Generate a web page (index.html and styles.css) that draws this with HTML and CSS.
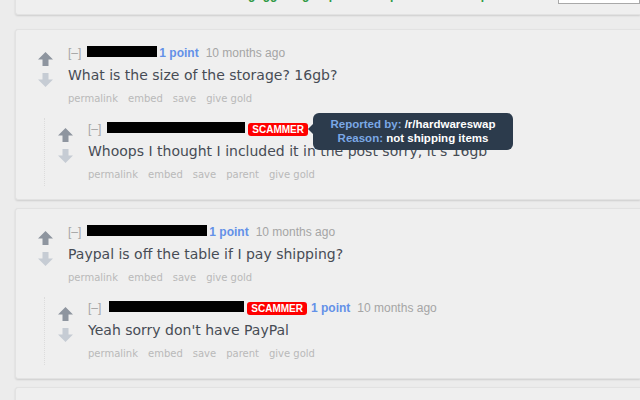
FILE: index.html
```html
<!DOCTYPE html>
<html lang="en">
<head>
    <meta charset="UTF-8">
    <title>Comments</title>
    <link rel="stylesheet" href="styles.css">
</head>
<body>
    <div class="page">
        <div class="card card-top">
            <p class="notice">gogg the group rules · report trades · help</p>
            <input class="search" type="text">
        </div>

        <!-- erster Thread -->
        <div class="card">
            <div class="comment">
                <div class="votes">
                    <svg class="arrow up" width="15" height="14" viewBox="0 0 15 14"><polygon points="7.5,0 15,7.5 10.5,7.5 10.5,14 4.5,14 4.5,7.5 0,7.5"/></svg>
                    <svg class="arrow down" width="15" height="14" viewBox="0 0 15 14"><polygon points="7.5,14 15,6.5 10.5,6.5 10.5,0 4.5,0 4.5,6.5 0,6.5"/></svg>
                </div>
                <div class="entry">
                    <p class="tagline"><span class="expand">[–]</span><span class="redacted w70"></span><span class="score">1 point</span><span class="time">10 months ago</span></p>
                    <p class="md">What is the size of the storage? 16gb?</p>
                    <ul class="buttons">
                        <li>permalink</li><li>embed</li><li>save</li><li>give gold</li>
                    </ul>
                </div>
            </div>
            <div class="child">
                <div class="comment">
                    <div class="votes">
                        <svg class="arrow up" width="15" height="14" viewBox="0 0 15 14"><polygon points="7.5,0 15,7.5 10.5,7.5 10.5,14 4.5,14 4.5,7.5 0,7.5"/></svg>
                        <svg class="arrow down" width="15" height="14" viewBox="0 0 15 14"><polygon points="7.5,14 15,6.5 10.5,6.5 10.5,0 4.5,0 4.5,6.5 0,6.5"/></svg>
                    </div>
                    <div class="entry">
                        <p class="tagline"><span class="expand">[–]</span><span class="redacted w138"></span><span class="badge">SCAMMER<span class="tooltip"><b>Reported by:</b> /r/hardwareswap<br><b>Reason:</b> not shipping items</span></span></p>
                        <p class="md">Whoops I thought I included it in the post sorry, it's 16gb</p>
                        <ul class="buttons">
                            <li>permalink</li><li>embed</li><li>save</li><li>parent</li><li>give gold</li>
                        </ul>
                    </div>
                </div>
            </div>
        </div>

        <!-- zweiter Thread -->
        <div class="card">
            <div class="comment">
                <div class="votes">
                    <svg class="arrow up" width="15" height="14" viewBox="0 0 15 14"><polygon points="7.5,0 15,7.5 10.5,7.5 10.5,14 4.5,14 4.5,7.5 0,7.5"/></svg>
                    <svg class="arrow down" width="15" height="14" viewBox="0 0 15 14"><polygon points="7.5,14 15,6.5 10.5,6.5 10.5,0 4.5,0 4.5,6.5 0,6.5"/></svg>
                </div>
                <div class="entry">
                    <p class="tagline"><span class="expand">[–]</span><span class="redacted w120"></span><span class="score">1 point</span><span class="time">10 months ago</span></p>
                    <p class="md">Paypal is off the table if I pay shipping?</p>
                    <ul class="buttons">
                        <li>permalink</li><li>embed</li><li>save</li><li>give gold</li>
                    </ul>
                </div>
            </div>
            <div class="child">
                <div class="comment">
                    <div class="votes">
                        <svg class="arrow up" width="15" height="14" viewBox="0 0 15 14"><polygon points="7.5,0 15,7.5 10.5,7.5 10.5,14 4.5,14 4.5,7.5 0,7.5"/></svg>
                        <svg class="arrow down" width="15" height="14" viewBox="0 0 15 14"><polygon points="7.5,14 15,6.5 10.5,6.5 10.5,0 4.5,0 4.5,6.5 0,6.5"/></svg>
                    </div>
                    <div class="entry">
                        <p class="tagline"><span class="expand wide">[–]</span><span class="redacted w135"></span><span class="badge">SCAMMER</span><span class="score">1 point</span><span class="time">10 months ago</span></p>
                        <p class="md">Yeah sorry don't have PayPal</p>
                        <ul class="buttons">
                            <li>permalink</li><li>embed</li><li>save</li><li>parent</li><li>give gold</li>
                        </ul>
                    </div>
                </div>
            </div>
        </div>

        <div class="card"></div>
    </div>
</body>
</html>
```

FILE: styles.css
```css
body {
    margin: 0;
    background-color: #ececec;
    font-family: "Liberation Sans", Arial, sans-serif;
    overflow: hidden;
}

p, ul {
    margin: 0;
    padding: 0;
}

.page {
    padding-left: 15px;
}

.card {
    background-color: #efefef;
    border: 1px solid #e2e2e2;
    border-right: none;
    border-radius: 3px 0 0 3px;
    box-shadow: 0 1px 2px rgba(0, 0, 0, 0.13);
    margin-bottom: 8px;
    padding: 15px 0 14px 22px;
    height: 140px;
}

/* oberer, abgeschnittener Kasten */
.card-top {
    margin-top: -30px;
    margin-bottom: 14px;
    height: 43px;
    padding: 0;
    display: flex;
    justify-content: flex-end;
    align-items: flex-start;
    position: relative;
}

.notice {
    position: absolute;
    left: 232px;
    top: 16px;
    color: #2f9a45;
    font-size: 12px;
    font-weight: bold;
    line-height: 16px;
    white-space: nowrap;
}

.search {
    width: 82px;
    height: 20px;
    margin-top: 13px;
    border: 1px solid #a9a9a9;
    background: #fff;
    padding: 0;
    box-sizing: border-box;
}

.comment {
    display: flex;
}

.votes {
    width: 15px;
    margin-right: 15px;
    padding-top: 7px;
    display: flex;
    flex-direction: column;
    gap: 7px;
}

.arrow {
    display: block;
}

.arrow.up {
    fill: #8e959f;
}

.arrow.down {
    fill: #c6ccd4;
}

.tagline {
    font-size: 12px;
    line-height: 16px;
    white-space: nowrap;
    color: #a5a5a5;
}

.expand {
    margin-right: 6px;
}

.expand.wide {
    margin-right: 8px;
}

.redacted {
    display: inline-block;
    height: 11px;
    background: #000;
    vertical-align: 0;
}

.w70 { width: 70px; }
.w120 { width: 120px; }
.w135 { width: 135px; }
.w138 { width: 138px; }

.score {
    color: #6391e8;
    font-weight: bold;
    margin-left: 2px;
    margin-right: 7px;
}

.time {
    color: #a5a5a5;
}

.badge {
    position: relative;
    display: inline-block;
    background: #ff0000;
    color: #fff;
    font-size: 10px;
    font-weight: bold;
    line-height: 13px;
    padding: 0 4px;
    border-radius: 3px;
    margin-left: 3px;
    vertical-align: 0;
}

.badge + .score {
    margin-left: 4px;
}

/* Tooltip neben dem Scammer-Tag */
.tooltip {
    position: absolute;
    left: calc(100% + 5px);
    top: -10px;
    width: 200px;
    height: 37px;
    box-sizing: border-box;
    padding-top: 4px;
    background: #2c3b4c;
    border-radius: 6px;
    color: #fff;
    font-size: 11.5px;
    font-weight: bold;
    line-height: 14px;
    text-align: center;
}

.tooltip b {
    color: #7ba8e6;
}

.tooltip::before {
    content: "";
    position: absolute;
    left: -5px;
    top: 11px;
    border-top: 5px solid transparent;
    border-bottom: 5px solid transparent;
    border-right: 5px solid #2c3b4c;
}

.md {
    margin-top: 4px;
    font-family: "DejaVu Sans", Verdana, sans-serif;
    font-size: 14px;
    line-height: 20px;
    color: #474c55;
    white-space: nowrap;
}

.buttons {
    list-style: none;
    margin-top: 7px;
    display: flex;
    gap: 10px;
    font-family: "DejaVu Sans", Verdana, sans-serif;
    font-size: 10px;
    line-height: 14px;
    color: #b9b9b9;
}

.child {
    margin: 12px 0 0 6px;
    border-left: 1px dotted #dcdcdc;
    padding: 3px 0 4px 13px;
}
```
